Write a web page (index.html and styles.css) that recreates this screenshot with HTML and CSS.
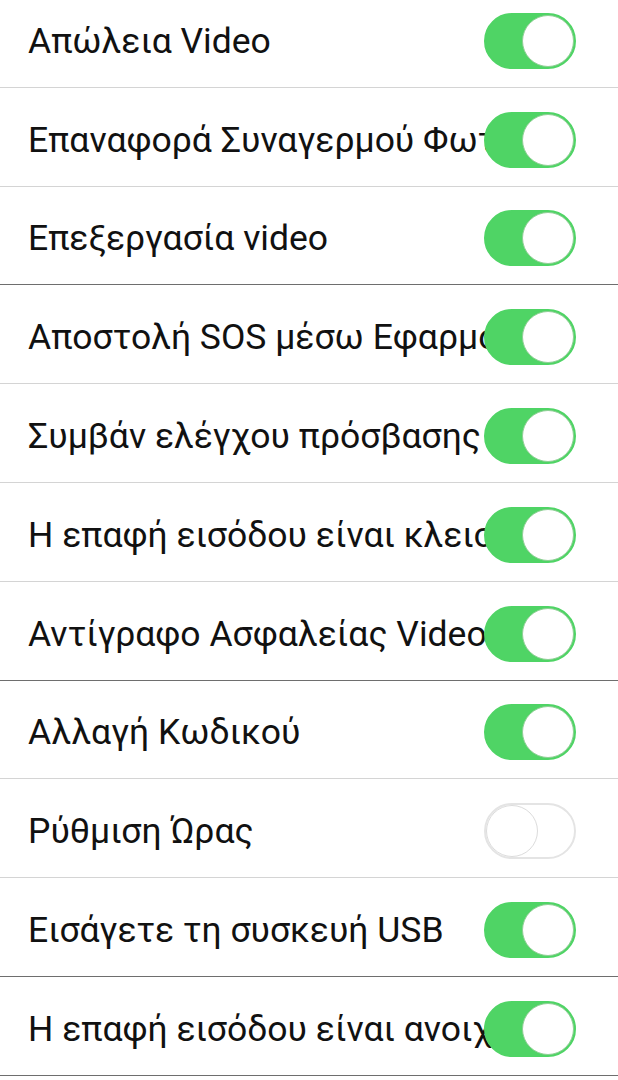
FILE: index.html
```html
<!DOCTYPE html>
<html lang="el">

<head>
  <meta charset="UTF-8">
  <meta name="viewport" content="width=device-width, initial-scale=1.0">
  <title>Ειδοποιήσεις</title>
  <link rel="stylesheet" href="styles.css">
</head>

<body>
  <ul class="list">
    <li class="row">
      <span class="label">Απώλεια Video</span>
      <span class="switch on"><span class="knob"></span></span>
    </li>
    <li class="row">
      <span class="label">Επαναφορά Συναγερμού Φωτοκύτταρου</span>
      <span class="switch on"><span class="knob"></span></span>
    </li>
    <li class="row dark">
      <span class="label">Επεξεργασία video</span>
      <span class="switch on"><span class="knob"></span></span>
    </li>
    <li class="row">
      <span class="label">Αποστολή SOS μέσω Εφαρμογής</span>
      <span class="switch on"><span class="knob"></span></span>
    </li>
    <li class="row">
      <span class="label">Συμβάν ελέγχου πρόσβασης</span>
      <span class="switch on"><span class="knob"></span></span>
    </li>
    <li class="row">
      <span class="label">Η επαφή εισόδου είναι κλειστή</span>
      <span class="switch on"><span class="knob"></span></span>
    </li>
    <li class="row dark">
      <span class="label">Αντίγραφο Ασφαλείας Video</span>
      <span class="switch on"><span class="knob"></span></span>
    </li>
    <li class="row">
      <span class="label">Αλλαγή Κωδικού</span>
      <span class="switch on"><span class="knob"></span></span>
    </li>
    <li class="row">
      <span class="label">Ρύθμιση Ώρας</span>
      <span class="switch"><span class="knob"></span></span>
    </li>
    <li class="row dark">
      <span class="label">Εισάγετε τη συσκευή USB</span>
      <span class="switch on"><span class="knob"></span></span>
    </li>
    <li class="row dark">
      <span class="label">Η επαφή εισόδου είναι ανοιχτή</span>
      <span class="switch on"><span class="knob"></span></span>
    </li>
  </ul>
</body>

</html>
```

FILE: styles.css
```css
body {
  margin: 0;
  background-color: #fff;
  font-family: Roboto, "Noto Sans", sans-serif;
  color: #111;
  overflow: hidden;
}

.list {
  list-style: none;
  margin: -11px 0 0 0;
  padding: 0;
}

.row {
  box-sizing: border-box;
  height: 98.8px;
  display: flex;
  align-items: center;
  padding: 6px 42px 0 28px;
  border-bottom: 1.5px solid #d4d4d4;
}

/* some lines come out darker in the capture */
.row.dark {
  border-bottom: 1px solid #6e6e6e;
}

.label {
  flex: 1;
  min-width: 0;
  font-size: 35.5px;
  white-space: nowrap;
  overflow: hidden;
  margin-right: -60px;
}

/* toggle */
.switch {
  position: relative;
  flex: none;
  box-sizing: border-box;
  width: 92px;
  height: 56px;
  border-radius: 28px;
  border: 2px solid #e4e4e4;
  background-color: #fff;
  display: flex;
  align-items: center;
  justify-content: flex-start;
}

.switch.on {
  background-color: #4fd465;
  border-color: #4fd465;
  justify-content: flex-end;
}

.knob {
  box-sizing: border-box;
  width: 52px;
  height: 52px;
  border-radius: 50%;
  background-color: #fff;
  border: 1.5px solid #dcdcdc;
}

.switch.on .knob {
  border-color: #8fcf95;
}
```
